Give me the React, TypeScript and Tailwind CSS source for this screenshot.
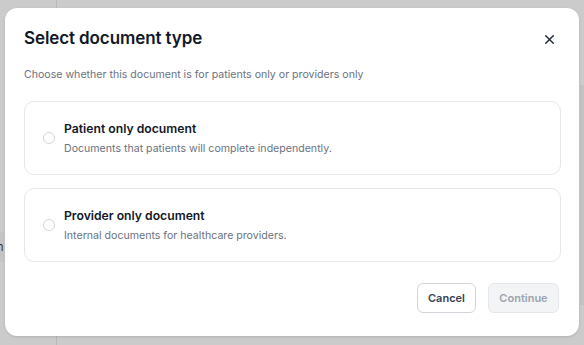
import { X } from 'lucide-react';

const options = [
  { title: 'Patient only document', desc: 'Documents that patients will complete independently.' },
  { title: 'Provider only document', desc: 'Internal documents for healthcare providers.' },
];

export default function App() {
  return (
    <div
      className="relative w-[584px] h-[345px] overflow-hidden bg-[#cbcbcb]"
      style={{ fontFamily: 'Inter, "Noto Sans", sans-serif' }}
    >
      {/* background page showing through the overlay */}
      <div className="absolute left-[56px] top-0 bottom-0 w-px bg-[#b9b9b9]" />
      <div className="absolute right-0 top-[85px] bottom-[40px] w-[4px] bg-[#c2c2c2]" />
      <div className="absolute left-0 top-[232px] h-[30px] w-[4px] bg-[#c4c4c4] text-[11px] leading-[30px] text-[#333] overflow-hidden">
        <span className="relative -left-[3px]">n</span>
      </div>

      {/* Dialog */}
      <div className="absolute left-[5px] top-[8px] w-[574px] h-[328px] rounded-[12px] bg-white shadow-sm pl-[19px] pr-[18px] pt-[20px]">
        <div className="flex items-center justify-between h-[22px]">
          <h2 className="text-[17px] font-semibold text-[#111827] tracking-[-0.1px]">Select document type</h2>
          <button className="mr-[4px] text-[#1f2937]">
            <X size={15} strokeWidth={2.2} />
          </button>
        </div>
        <p className="mt-[17px] text-[10.6px] leading-[16px] text-[#6b7280]">
          Choose whether this document is for patients only or providers only
        </p>

        <div className="mt-[18px] flex flex-col gap-[13px]">
          {options.map((o) => (
            <div
              key={o.title}
              className="flex items-center h-[74px] rounded-[10px] border border-[#e5e7eb] pl-[18px]"
            >
              <span className="w-[12px] h-[12px] rounded-full border border-[#d1d5db]" />
              <div className="ml-[9px] flex flex-col">
                <span className="text-[12.2px] font-semibold leading-[18px] text-[#111827]">{o.title}</span>
                <span className="mt-[3px] text-[10.6px] leading-[15px] text-[#6b7280]">{o.desc}</span>
              </div>
            </div>
          ))}
        </div>

        <div className="mt-[21px] flex justify-end gap-[12px] pr-[2px]">
          <button className="h-[30px] w-[59px] rounded-[6px] border border-[#d1d5db] bg-white text-[11px] font-semibold text-[#374151]">
            Cancel
          </button>
          <button className="h-[30px] w-[71px] rounded-[6px] border border-[#e5e7eb] bg-[#f3f4f6] text-[11px] font-semibold text-[#9ca3af]">
            Continue
          </button>
        </div>
      </div>
    </div>
  );
}
